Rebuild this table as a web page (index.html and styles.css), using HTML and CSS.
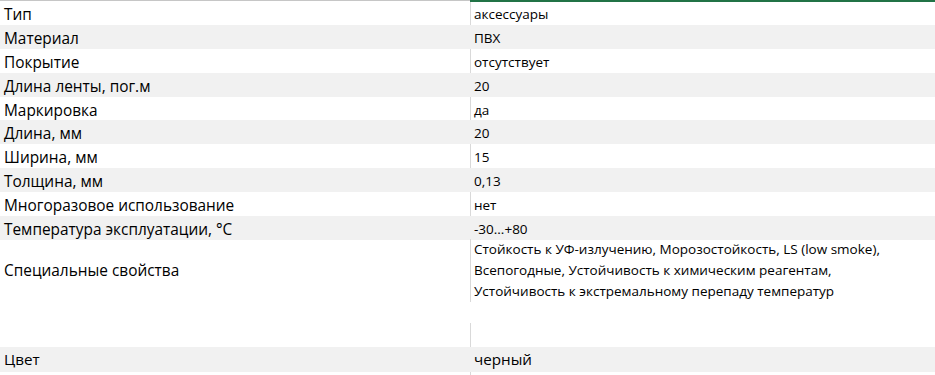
FILE: index.html
```html
<!DOCTYPE html>
<html lang="ru">
<head>
<meta charset="utf-8">
<title>Характеристики</title>
<link rel="stylesheet" href="styles.css">
</head>
<body>
<div class="sheet">
  <div class="row"><div class="key">Тип</div><div class="val line">аксессуары</div></div>
  <div class="row alt"><div class="key">Материал</div><div class="val">ПВХ</div></div>
  <div class="row"><div class="key">Покрытие</div><div class="val line">отсутствует</div></div>
  <div class="row alt"><div class="key">Длина ленты, пог.м</div><div class="val">20</div></div>
  <div class="row"><div class="key">Маркировка</div><div class="val line">да</div></div>
  <div class="row alt"><div class="key">Длина, мм</div><div class="val">20</div></div>
  <div class="row"><div class="key">Ширина, мм</div><div class="val line">15</div></div>
  <div class="row alt"><div class="key">Толщина, мм</div><div class="val">0,13</div></div>
  <div class="row"><div class="key">Многоразовое использование</div><div class="val line">нет</div></div>
  <div class="row alt"><div class="key">Температура эксплуатации, °C</div><div class="val">-30...+80</div></div>
  <div class="row tall">
    <div class="key">Специальные свойства</div>
    <div class="val line multi">Стойкость к УФ-излучению, Морозостойкость, LS (low smoke),<br>Всепогодные, Устойчивость к химическим реагентам,<br>Устойчивость к экстремальному перепаду температур</div>
  </div>
  <div class="gap"><div></div><div class="gap-line"></div></div>
  <div class="row alt big"><div class="key">Цвет</div><div class="val">черный</div></div>
  <div class="tail"><div></div><div class="gap-line"></div></div>
</div>
</body>
</html>
```
FILE: styles.css
```css
html, body {
  margin: 0;
  padding: 0;
  background: #ffffff;
}
body {
  font-family: "Open Sans", "Liberation Sans", sans-serif;
  color: #000000;
  width: 935px;
  height: 375px;
  overflow: hidden;
}
.sheet {
  display: flex;
  flex-direction: column;
  border-top: 1px solid #c6c6c6;
  position: relative;
}
.sheet::before {
  content: "";
  position: absolute;
  left: 470px;
  right: 0;
  top: -1px;
  height: 2px;
  background: #217346;
}
.row {
  display: grid;
  grid-template-columns: 470px 1fr;
  height: 23.9px;
  align-items: stretch;
}
.row.alt {
  background: #f1f1f1;
}
.key {
  padding-left: 4px;
  font-size: 15.4px;
  line-height: 21px;
  padding-top: 3px;
  white-space: nowrap;
}
.val {
  padding-left: 3px;
  font-size: 13.5px;
  line-height: 21px;
  padding-top: 3px;
  border-left: 1px solid transparent;
  white-space: nowrap;
}
.val.line {
  border-left-color: #d9d9d9;
}
.row.tall {
  height: auto;
  align-items: center;
}
.row.tall .key {
  padding-top: 0;
}
.val.multi {
  line-height: 21px;
  padding-top: 0;
  margin-top: -1px;
  align-self: start;
}
.gap {
  display: grid;
  grid-template-columns: 470px 1fr;
  height: 45px;
}
.gap-line {
  border-left: 1px solid #d9d9d9;
  margin-top: 21px;
}
.row.big {
  height: 25px;
}
.row.big .key,
.row.big .val {
  font-size: 15.2px;
  line-height: 25px;
  padding-top: 0;
}
.tail {
  display: grid;
  grid-template-columns: 470px 1fr;
  height: 10px;
}
.tail .gap-line {
  margin-top: 0;
}
```
